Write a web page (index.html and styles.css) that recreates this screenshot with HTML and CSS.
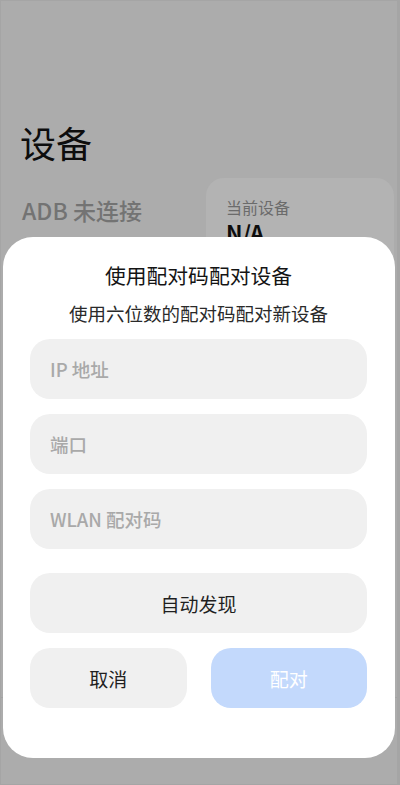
FILE: index.html
```html
<!DOCTYPE html>
<html lang="zh-CN">
<head>
<meta charset="utf-8">
<title>设备</title>
<link rel="stylesheet" href="styles.css">
</head>
<body>
<div class="screen">
  <div class="page">
    <h1 class="page-title">设备</h1>
    <div class="status-row">
      <div class="adb-status">ADB 未连接</div>
      <div class="device-card">
        <div class="device-label">当前设备</div>
        <div class="device-value">N/A</div>
      </div>
    </div>
  </div>
  <div class="footer"></div>

  <div class="dialog">
    <div class="dialog-title">使用配对码配对设备</div>
    <div class="dialog-sub">使用六位数的配对码配对新设备</div>
    <div class="fields">
      <input class="field" type="text" placeholder="IP 地址">
      <input class="field" type="text" placeholder="端口">
      <input class="field" type="text" placeholder="WLAN 配对码">
    </div>
    <button class="btn btn-wide">自动发现</button>
    <div class="btn-row">
      <button class="btn btn-cancel">取消</button>
      <button class="btn btn-pair">配对</button>
    </div>
  </div>
</div>
</body>
</html>
```

FILE: styles.css
```css
* { box-sizing: border-box; }
html, body { margin: 0; padding: 0; }
body {
  font-family: "Noto Sans CJK SC", "Noto Sans", sans-serif;
  background: #acacac;
}
.screen {
  position: relative;
  width: 400px;
  height: 785px;
  background: #acacac;
  border: 1px solid #a5a5a5;
  border-right-width: 3px;
  display: flex;
  flex-direction: column;
  overflow: hidden;
}
.page {
  flex: 1;
  padding: 119px 3px 0 19px;
}
.page-title {
  margin: 0;
  font-size: 36px;
  line-height: 44px;
  font-weight: 400;
  color: #0d0d0d;
}
.status-row {
  display: flex;
  align-items: flex-start;
  margin-top: 14px;
}
.adb-status {
  flex: 1;
  margin-top: 18px;
  padding-left: 2px;
  font-size: 23px;
  line-height: 28px;
  font-weight: 500;
  color: #737373;
}
.device-card {
  width: 188px;
  height: 120px;
  background: #b3b3b3;
  border-radius: 18px;
  padding: 19px 20px;
}
.device-label {
  font-size: 16px;
  line-height: 20px;
  color: #6b6b6b;
}
.device-value {
  margin-top: 3px;
  font-size: 22px;
  line-height: 24px;
  font-weight: 700;
  color: #0d0d0d;
}
.footer {
  height: 87px;
  border-top: 1px solid #a3a3a3;
}
.dialog {
  position: absolute;
  left: 2px;
  top: 236px;
  width: 392px;
  height: 521px;
  background: #ffffff;
  border-radius: 30px;
  padding: 24px 28px 0 27px;
  display: flex;
  flex-direction: column;
}
.dialog-title {
  text-align: center;
  font-size: 20.8px;
  line-height: 28px;
  color: #141414;
}
.dialog-sub {
  margin-top: 12px;
  text-align: center;
  font-size: 18.5px;
  line-height: 24px;
  color: #2a2a2a;
}
.fields {
  margin-top: 14px;
  display: flex;
  flex-direction: column;
  gap: 15px;
}
.field {
  display: block;
  width: 100%;
  height: 60px;
  border: none;
  outline: none;
  background: #f0f0f0;
  border-radius: 20px;
  padding: 0 20px;
  font-family: inherit;
  font-size: 18.5px;
  font-weight: 500;
  color: #222;
}
.field::placeholder {
  color: #a9a9a9;
}
.btn {
  display: block;
  height: 60px;
  border: none;
  border-radius: 20px;
  font-family: inherit;
  font-size: 19px;
  padding: 0;
  cursor: pointer;
}
.btn-wide {
  margin-top: 24px;
  width: 100%;
  background: #f0f0f0;
  color: #1f1f1f;
}
.btn-row {
  margin-top: 15px;
  display: flex;
  gap: 24px;
}
.btn-row .btn { flex: 1; }
.btn-cancel {
  background: #f0f0f0;
  color: #1f1f1f;
}
.btn-pair {
  background: #c3d9fc;
  color: #ffffff;
}
```
